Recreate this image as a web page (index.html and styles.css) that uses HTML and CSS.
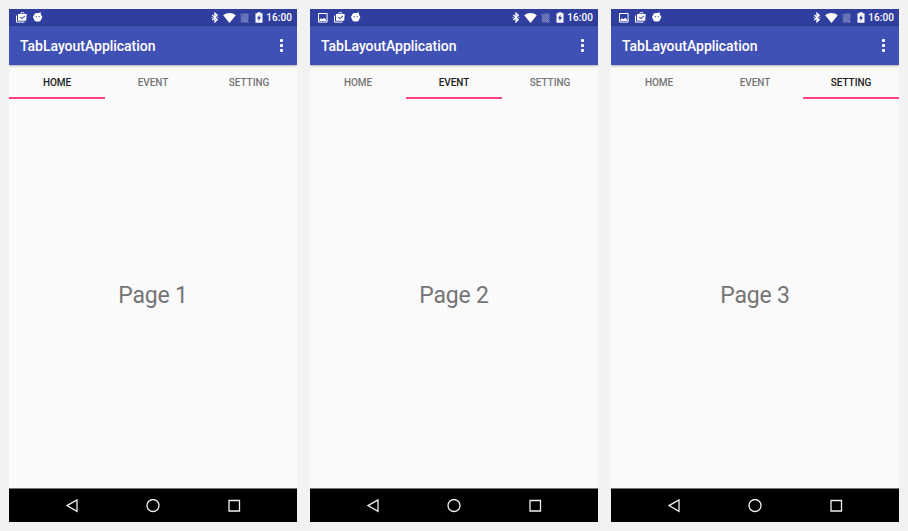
FILE: index.html
```
<!DOCTYPE html>
<html lang="en">
<head>
<meta charset="utf-8">
<title>TabLayoutApplication</title>
<link rel="stylesheet" href="styles.css">
</head>
<body>
<svg class="sprite" aria-hidden="true">
  <symbol id="image" viewBox="0 0 10 10"><path d="M.5.5h8.6v8.6H.5z" fill="none" stroke="currentColor"/><path d="M1.5 8V6.3L3.2 5.2l1.3 1 1.8-1.5L8.3 7v1z"/></symbol>
  <symbol id="bag" viewBox="0 0 11 11"><path d="M.5 3.5v6.6h8" fill="none" stroke="currentColor"/><path fill-rule="evenodd" d="M2 2h2.5V1l.9-.8h2l.9.8v1h2.4L10.2 8.8H2zM5.3 2h2.2V1H5.3zM3.9 5.3 6 7.3l3.2-3.1-.6-.6L6 6 4.5 4.7z"/></symbol>
  <symbol id="android" viewBox="0 0 10 10"><path fill-rule="evenodd" d="M1 3.2Q1 1 3.3.9h2.9L7.4 0l.5.4-.5 1Q8.3 2 8.3 3.2v.6h.8v2.8h-.8Q8.3 9.4 6 9.4H3.3Q1 9.4 1 6.6H.2V3.8H1zM2.7 4.3v1h1.2v-1zm2.9 0v1h1.2v-1z"/></symbol>
  <symbol id="bluetooth" viewBox="0 0 8 11"><path d="M1.3 2.9 6.2 7.8 4 9.8V1.2l2.2 2L1.3 8" fill="none" stroke="currentColor" stroke-width="1.3"/><circle cx="1.1" cy="5.5" r=".6"/><circle cx="6.9" cy="5.5" r=".6"/></symbol>
  <symbol id="wifi" viewBox="0 0 13 10"><path d="M.2 2.2C4-.6 9-.6 12.8 2.2L6.5 10z"/></symbol>
  <symbol id="nosim" viewBox="0 0 9 10"><path d="M3.2.4h5.2v7.8L2 1.6zM.8 2.5l7.4 7.1H.8z" opacity=".55"/><path d="m.4.8 8 8.7" stroke="currentColor" stroke-width="1"/></symbol>
  <symbol id="battery" viewBox="0 0 8 11"><path fill-rule="evenodd" d="M.5 1.2h2V.2h3v1h2v9.5h-7zM4.5 2.7 1.8 6.4h1.7v2.7l2.7-3.9H4.5z"/></symbol>
</svg>
<main class="gallery">
  <section class="phone">
    <header class="status">
      <svg class="i-bag"><use href="#bag"/></svg><svg class="i-android"><use href="#android"/></svg>
      <div class="system"><svg class="i-bt"><use href="#bluetooth"/></svg><svg class="i-wifi"><use href="#wifi"/></svg><svg class="i-sim"><use href="#nosim"/></svg><svg class="i-bat"><use href="#battery"/></svg><time>16:00</time></div>
    </header>
    <div class="appbar"><h1>TabLayoutApplication</h1><div class="more"><i></i><i></i><i></i></div></div>
    <nav class="tabs"><span class="tab active">HOME</span><span class="tab">EVENT</span><span class="tab">SETTING</span></nav>
    <div class="page"><p>Page 1</p></div>
    <footer class="navbar">
      <svg viewBox="0 0 14 14"><path d="M12 .9v11.4L2 6.6z"/></svg>
      <svg viewBox="0 0 14 14"><circle cx="7" cy="6.5" r="6"/></svg>
      <svg viewBox="0 0 14 14"><path d="M2 1.5h10.5V12H2z"/></svg>
    </footer>
  </section>
  <section class="phone">
    <header class="status">
      <svg class="i-image"><use href="#image"/></svg><svg class="i-bag"><use href="#bag"/></svg><svg class="i-android"><use href="#android"/></svg>
      <div class="system"><svg class="i-bt"><use href="#bluetooth"/></svg><svg class="i-wifi"><use href="#wifi"/></svg><svg class="i-sim"><use href="#nosim"/></svg><svg class="i-bat"><use href="#battery"/></svg><time>16:00</time></div>
    </header>
    <div class="appbar"><h1>TabLayoutApplication</h1><div class="more"><i></i><i></i><i></i></div></div>
    <nav class="tabs"><span class="tab">HOME</span><span class="tab active">EVENT</span><span class="tab">SETTING</span></nav>
    <div class="page"><p>Page 2</p></div>
    <footer class="navbar">
      <svg viewBox="0 0 14 14"><path d="M12 .9v11.4L2 6.6z"/></svg>
      <svg viewBox="0 0 14 14"><circle cx="7" cy="6.5" r="6"/></svg>
      <svg viewBox="0 0 14 14"><path d="M2 1.5h10.5V12H2z"/></svg>
    </footer>
  </section>
  <section class="phone">
    <header class="status">
      <svg class="i-image"><use href="#image"/></svg><svg class="i-bag"><use href="#bag"/></svg><svg class="i-android"><use href="#android"/></svg>
      <div class="system"><svg class="i-bt"><use href="#bluetooth"/></svg><svg class="i-wifi"><use href="#wifi"/></svg><svg class="i-sim"><use href="#nosim"/></svg><svg class="i-bat"><use href="#battery"/></svg><time>16:00</time></div>
    </header>
    <div class="appbar"><h1>TabLayoutApplication</h1><div class="more"><i></i><i></i><i></i></div></div>
    <nav class="tabs"><span class="tab">HOME</span><span class="tab">EVENT</span><span class="tab active">SETTING</span></nav>
    <div class="page"><p>Page 3</p></div>
    <footer class="navbar">
      <svg viewBox="0 0 14 14"><path d="M12 .9v11.4L2 6.6z"/></svg>
      <svg viewBox="0 0 14 14"><circle cx="7" cy="6.5" r="6"/></svg>
      <svg viewBox="0 0 14 14"><path d="M2 1.5h10.5V12H2z"/></svg>
    </footer>
  </section>
</main>
</body>
</html>
```
FILE: styles.css
```
* { box-sizing: border-box; }
body { margin: 0; background: #f2f2f2; font-family: Roboto, sans-serif; }
.sprite { display: none; }
.gallery { display: flex; gap: 13px; padding: 9px; height: 531px; }
.phone { width: 288px; height: 513px; display: flex; flex-direction: column; background: #fafafa; }
.status { height: 17px; display: flex; align-items: center; padding: 0 5px 0 7px; background: linear-gradient(#303f9f 14px, #2a378d); color: #fff; }
.status svg { display: block; flex: none; fill: currentColor; }
.i-image { width: 10px; height: 10px; margin: 0 6px 0 1px; }
.i-bag { width: 11px; height: 11px; margin-right: 6px; }
.i-android { width: 10px; height: 10px; margin-top: -1px; }
.system { display: flex; align-items: center; margin-left: auto; }
.i-bt { width: 8px; height: 11px; margin-right: 4px; }
.i-wifi { width: 13px; height: 10px; margin-right: 4px; }
.i-sim { width: 9px; height: 10px; margin-right: 6px; opacity: .5; }
.i-bat { width: 8px; height: 11px; margin-right: 3px; }
time { font-size: 10px; font-weight: 500; line-height: 17px; letter-spacing: .1px; }
.appbar { height: 39px; display: flex; align-items: center; justify-content: space-between; padding: 0 14px 0 11px; background: #3f51b5; color: #fff; box-shadow: 0 1px 2px rgba(0, 0, 0, .3); clip-path: inset(0 0 -4px 0); }
h1 { margin: 0; font-size: 14px; line-height: 20px; font-weight: 500; letter-spacing: -.03px; }
.more { display: grid; gap: 2px; margin-top: -1px; }
.more i { width: 3px; height: 3px; border-radius: 1px; background: #fff; }
.tabs { height: 34px; display: grid; grid-template-columns: repeat(3, 1fr); }
.tab { text-align: center; font-size: 10px; line-height: 35px; font-weight: 500; letter-spacing: -.05px; color: #757575; height: 34px; }
.active { color: #212121; border-bottom: 2px solid #ff4081; }
.page { flex: 1; display: flex; align-items: center; justify-content: center; padding-top: 5px; color: #757575; }
p { margin: 0; font-size: 23px; line-height: 28px; letter-spacing: -.2px; }
.navbar { height: 34px; border-top: 1px solid #777; background: #000; display: flex; align-items: center; justify-content: center; gap: 67px; }
.navbar svg { width: 14px; height: 14px; fill: none; stroke: #f0f0f0; stroke-width: 1.3; }
```
